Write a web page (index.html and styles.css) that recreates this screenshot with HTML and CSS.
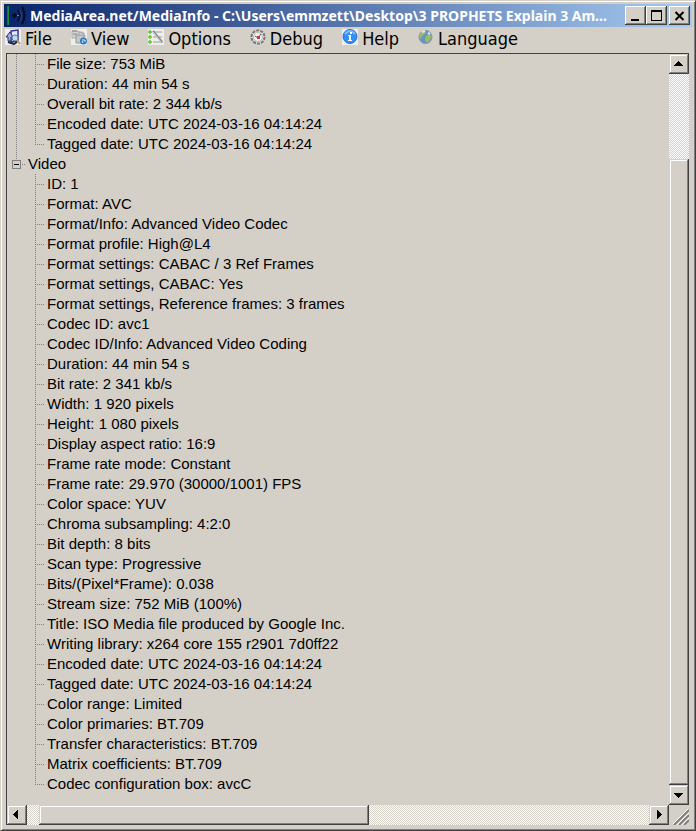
FILE: index.html
```
<!DOCTYPE html>
<html lang="en">

<head>
    <meta charset="utf-8">
    <title>MediaArea.net/MediaInfo</title>
    <meta name="viewport" content="width=device-width, initial-scale=1">
    <link rel="stylesheet" href="styles.css">
</head>

<body>
    <div class="window">
        <header class="titlebar">
            <svg class="logo" width="24" height="20" viewBox="0 0 24 20">
                <path d="M2.500 0v19" stroke="#b02838" />
                <path d="M3.500 0v19" stroke="#109040" />
                <path d="M7 9.500h5M9.500 7v5" stroke="#05081c" stroke-width="2" />
                <path d="M12 9.500h2" stroke="#8090b0" />
                <path d="M13 4q4 5 0 11M17 1q5 8 0 17" fill="none" stroke="#060b26" stroke-width="2" />
                <path d="M15 4q3 6 0 11" fill="none" stroke="#30477c" />
            </svg>
            <h1 class="title">MediaArea.net/MediaInfo - C:\Users\emmzett\Desktop\3 PROPHETS Explain 3 Am...</h1>
            <div class="controls">
                <button class="control" aria-label="Minimize">
                    <svg width="16" height="14" viewBox="0 0 16 14"><path d="M3 10h8v2H3z" /></svg>
                </button>
                <button class="control" aria-label="Maximize">
                    <svg width="16" height="14" viewBox="0 0 16 14"><path d="M2 1h11v11H2zM3 3v8h9V3z" fill-rule="evenodd" /></svg>
                </button>
                <button class="control close" aria-label="Close">
                    <svg width="16" height="14" viewBox="0 0 16 14"><path d="M3.500 3l8 8M11.500 3l-8 8" stroke="#000" stroke-width="2" /></svg>
                </button>
            </div>
        </header>

        <nav class="menubar">
            <button class="menu">
                <svg width="16" height="16" viewBox="0 0 16 16">
                    <path fill="#eeeef2" d="M0 0h16v16H0z" />
                    <path d="M6 2l7-1v11l-7 1z" fill="#e2e6f8" stroke="#34368c" stroke-width="1.500" />
                    <path d="M5 3L1 8h2v4h3V8h2z" fill="#a3abe0" stroke="#292c70" />
                    <path d="M3 13l6 2 3-2" fill="none" stroke="#202850" stroke-width="2" />
                    <circle cx="10" cy="9" r="3" fill="#b9dcf5" stroke="#607aa8" />
                    <path d="M12 11l3 4" stroke="#c39a50" stroke-width="2" />
                </svg>
                File
            </button>
            <button class="menu">
                <svg width="16" height="16" viewBox="0 0 16 16">
                    <path fill="#eeeeec" d="M0 0h16v16H0z" />
                    <path d="M1 2h6l1 2v5H1z" fill="#d5d5d5" stroke="#aaa" />
                    <path d="M1 2h5M2 5h4" stroke="#888" />
                    <path d="M5 6h8v8H5z" fill="#c5c8ca" stroke="#939799" />
                    <path d="M7 3l5 1 2 4" fill="none" stroke="#aab0b4" stroke-width="2" />
                    <circle cx="12.500" cy="12" r="3.500" fill="#2f78be" />
                    <path d="M11 11h3v2M12 14l-1-2" fill="none" stroke="#d9efff" />
                </svg>
                View
            </button>
            <button class="menu">
                <svg width="16" height="16" viewBox="0 0 16 16">
                    <path fill="#eeeeec" d="M0 0h16v16H0z" />
                    <path d="M5 3h9M5 8h9M5 13h10" stroke="#c4c4c4" stroke-width="2" />
                    <path d="M5 2l9 11" stroke="#898989" stroke-width="2" />
                    <path d="M5 3l8 10" stroke="#d9d9d9" />
                    <path d="M0 3h4M2 1v4M0 8h4M2 6v4M0 13h4M2 11v4" stroke="#62c832" stroke-width="1.500" />
                </svg>
                Options
            </button>
            <button class="menu">
                <svg width="16" height="16" viewBox="0 0 16 16">
                    <circle cx="8" cy="8" r="6.500" fill="#e8e8e6" stroke="#777" stroke-width="2" stroke-dasharray="3 1" />
                    <circle cx="8" cy="8" r="4.500" fill="#f2f2f0" stroke="#b5b5b5" />
                    <path d="M5 7l3 2 3-4" fill="none" stroke="#555" />
                    <path d="M7 7h3v3H7z" fill="#d23a2c" />
                </svg>
                Debug
            </button>
            <button class="menu">
                <svg width="16" height="16" viewBox="0 0 16 16">
                    <path fill="#eeeeec" d="M0 0h16v16H0z" />
                    <circle cx="8" cy="7.500" r="7" fill="#338ff2" stroke="#2575d8" />
                    <path d="M3 5q5-6 10 0" fill="none" stroke="#83bcf8" stroke-width="2" />
                    <path d="M8 3h2v2H8zM6 6h3v5h1v1H6v-1h1V7H6z" fill="#fff" />
                </svg>
                Help
            </button>
            <button class="menu">
                <svg width="16" height="16" viewBox="0 0 16 16">
                    <circle cx="7.500" cy="8" r="6.500" fill="#6595c6" stroke="#7895ad" />
                    <path d="M2 4l4-3 2 2-2 3-2 1-1 3-2-2zM8 7l3-2 3 2-2 4-3 3-2-3z" fill="#9fb968" />
                    <path d="M4 3l3-1M10 4l2 1" stroke="#d8edf7" stroke-width="2" />
                </svg>
                Language
            </button>
        </nav>

        <main class="pane">
            <div class="view">
                <ul class="tree">
                    <li class="branch">
                        <ul class="fields">
                            <li>File size: 753 MiB</li>
                            <li>Duration: 44 min 54 s</li>
                            <li>Overall bit rate: 2 344 kb/s</li>
                            <li>Encoded date: UTC 2024-03-16 04:14:24</li>
                            <li>Tagged date: UTC 2024-03-16 04:14:24</li>
                        </ul>
                    </li>
                    <li class="branch">
                        <div class="heading"><button class="toggle" aria-label="Collapse Video"></button>Video</div>
                        <ul class="fields">
                            <li>ID: 1</li>
                            <li>Format: AVC</li>
                            <li>Format/Info: Advanced Video Codec</li>
                            <li>Format profile: High@L4</li>
                            <li>Format settings: CABAC / 3 Ref Frames</li>
                            <li>Format settings, CABAC: Yes</li>
                            <li>Format settings, Reference frames: 3 frames</li>
                            <li>Codec ID: avc1</li>
                            <li>Codec ID/Info: Advanced Video Coding</li>
                            <li>Duration: 44 min 54 s</li>
                            <li>Bit rate: 2 341 kb/s</li>
                            <li>Width: 1 920 pixels</li>
                            <li>Height: 1 080 pixels</li>
                            <li>Display aspect ratio: 16:9</li>
                            <li>Frame rate mode: Constant</li>
                            <li>Frame rate: 29.970 (30000/1001) FPS</li>
                            <li>Color space: YUV</li>
                            <li>Chroma subsampling: 4:2:0</li>
                            <li>Bit depth: 8 bits</li>
                            <li>Scan type: Progressive</li>
                            <li>Bits/(Pixel*Frame): 0.038</li>
                            <li>Stream size: 752 MiB (100%)</li>
                            <li>Title: ISO Media file produced by Google Inc.</li>
                            <li>Writing library: x264 core 155 r2901 7d0ff22</li>
                            <li>Encoded date: UTC 2024-03-16 04:14:24</li>
                            <li>Tagged date: UTC 2024-03-16 04:14:24</li>
                            <li>Color range: Limited</li>
                            <li>Color primaries: BT.709</li>
                            <li>Transfer characteristics: BT.709</li>
                            <li>Matrix coefficients: BT.709</li>
                            <li>Codec configuration box: avcC</li>
                        </ul>
                    </li>
                </ul>
            </div>
            <div class="scrollbar vertical">
                <button class="arrow" aria-label="Scroll up">
                    <svg width="16" height="16" viewBox="0 0 16 16"><path d="M7 5h1v1h1v1h1v1h1v1h1v1H3V9h1V8h1V7h1V6h1z" /></svg>
                </button>
                <div class="track"><div class="thumb"></div></div>
                <button class="arrow" aria-label="Scroll down">
                    <svg width="16" height="16" viewBox="0 0 16 16"><path d="M3 6h9v1h-1v1h-1v1H9v1H8v1H7v-1H6V9H5V8H4V7H3z" /></svg>
                </button>
            </div>
            <div class="scrollbar horizontal">
                <button class="arrow" aria-label="Scroll left">
                    <svg width="16" height="16" viewBox="0 0 16 16"><path d="M9 3v9H8v-1H7v-1H6V9H5V8H4V7h1V6h1V5h1V4h1V3z" /></svg>
                </button>
                <div class="track"><div class="thumb"></div></div>
                <button class="arrow" aria-label="Scroll right">
                    <svg width="16" height="16" viewBox="0 0 16 16"><path d="M6 3h1v1h1v1h1v1h1v1h1v1h-1v1H9v1H8v1H7v1H6z" /></svg>
                </button>
            </div>
            <svg class="grip" width="16" height="16" viewBox="0 0 16 16">
                <path d="M1 16L16 1M6 16L16 6M11 16l5-5" stroke="#808080" stroke-width="2" />
                <path d="M0 15L15 0M4 16L16 4M9 16l7-7" stroke="#fff" />
            </svg>
        </main>
    </div>
</body>

</html>
```
FILE: styles.css
```
* {
    box-sizing: border-box;
}

body {
    margin: 0;
    background-color: #d4d0c8;
    color: #000;
}

button {
    margin: 0;
    padding: 0;
    border: none;
    background: none;
    color: inherit;
    font: inherit;
}

svg {
    display: block;
    flex: none;
}

.window {
    display: flex;
    flex-direction: column;
    min-height: 100vh;
    padding: 3px 6px 5px 2px;
    border: 1px solid;
    border-color: #d4d0c8 #404040 #404040 #d4d0c8;
    box-shadow: inset 1px 1px #fff, inset -1px -1px #808080;
}

/* title bar */
.titlebar {
    display: flex;
    align-items: center;
    height: 23px;
    margin-left: 1px;
    margin-right: -3px;
    padding-left: 1px;
    padding-right: 2px;
    background: linear-gradient(to right, #0a246a, #a6caf0);
    color: #fff;
}

.title {
    flex: 1;
    min-width: 0;
    margin: 0 0 0 1px;
    overflow: hidden;
    white-space: nowrap;
    text-overflow: ellipsis;
    font: bold 14px/22px "Noto Sans", "DejaVu Sans Condensed", sans-serif;
}

.controls {
    display: flex;
}

.control {
    display: flex;
    align-items: center;
    justify-content: center;
    width: 21px;
    height: 19px;
    background-color: #d4d0c8;
    box-shadow: inset -1px -1px #404040, inset 1px 1px #fff, inset -2px -2px #808080;
}

.close {
    margin-left: 2px;
}

/* menu */
.menubar {
    display: flex;
    gap: 19px;
    height: 26px;
    padding: 0 2px;
}

.menu {
    display: flex;
    gap: 4px;
    height: 23px;
    font: 18px/23px "DejaVu Sans Condensed", "DejaVu Sans", sans-serif;
}

.menu svg {
    margin-top: 2px;
}

/* tree and its scroll bars */
.pane {
    flex: 1;
    display: grid;
    grid-template-columns: 1fr 20px;
    grid-template-rows: 1fr 20px;
    margin-left: 3px;
    border-top: 1px solid #404040;
    border-left: 1px solid #404040;
}

.view {
    min-width: 0;
    overflow: hidden;
    padding-bottom: 11px;
}

.tree,
.fields {
    margin: 0;
    padding: 0;
    list-style: none;
}

.tree {
    font: 15px/20px "Liberation Sans", Arial, sans-serif;
    white-space: nowrap;
}

.branch {
    background: repeating-linear-gradient(to bottom, #808080 0 1px, transparent 1px 2px) 9px 0 / 1px 100% no-repeat;
}

.branch:last-child {
    background: none;
}

.heading {
    display: flex;
    align-items: center;
    padding-left: 5px;
    background: repeating-linear-gradient(to right, #808080 0 1px, transparent 1px 2px) 15px 10px / 3px 1px no-repeat,
        repeating-linear-gradient(to bottom, #808080 0 1px, transparent 1px 2px) 9px 0 / 1px 6px no-repeat;
}

.toggle {
    width: 9px;
    height: 9px;
    margin-right: 7px;
    border: 1px solid #808080;
    background: linear-gradient(#000, #000) center / 5px 1px no-repeat;
}

.fields li {
    padding-left: 40px;
    background: repeating-linear-gradient(to bottom, #808080 0 1px, transparent 1px 2px) 28px 0 / 1px 100% no-repeat,
        repeating-linear-gradient(to right, #808080 0 1px, transparent 1px 2px) 28px 10px / 9px 1px no-repeat;
}

.fields li:last-child {
    background-size: 1px 10px, 9px 1px;
}

.scrollbar {
    display: flex;
}

.vertical {
    flex-direction: column;
}

.arrow,
.thumb {
    background-color: #d4d0c8;
    box-shadow: inset -1px -1px #404040, inset 1px 1px #d4d0c8, inset -2px -2px #808080, inset 2px 2px #fff;
}

.arrow {
    display: flex;
    flex: none;
    align-items: center;
    justify-content: center;
    width: 20px;
    height: 20px;
}

.track {
    flex: 1;
    display: flex;
    background: repeating-conic-gradient(#fff 0 25%, #d4d0c8 0 50%) 0 0 / 2px 2px;
}

.vertical .track {
    flex-direction: column;
    justify-content: flex-end;
}

.vertical .thumb {
    height: 88%;
}

.horizontal .thumb {
    width: 53%;
    margin-left: 2%;
}

.grip {
    place-self: end;
}
```
